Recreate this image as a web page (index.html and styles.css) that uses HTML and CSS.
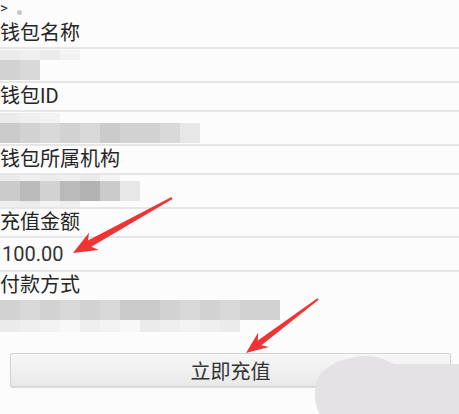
FILE: index.html
```html
<!DOCTYPE html>
<html lang="zh-CN">
<head>
    <meta charset="UTF-8">
    <meta name="viewport" content="width=device-width, initial-scale=1.0">
    <title>钱包充值</title>
    <link rel="stylesheet" href="styles.css">
</head>
<body>

<div class="page">
    <!-- top bar, mostly scrolled away -->
    <div class="topbar">
        <span class="back">&gt;</span>
        <span class="dot"></span>
    </div>

    <div class="label">钱包名称</div>
    <div class="value">
        <div class="strip s-top">
            <span class="c l1"></span><span class="c l2"></span><span class="c l1"></span><span class="c l3"></span>
        </div>
        <div class="strip s-main">
            <span class="c g3"></span><span class="c g4"></span>
        </div>
    </div>

    <div class="label">钱包ID</div>
    <div class="value">
        <div class="strip s-top">
            <span class="c l1"></span><span class="c l2"></span><span class="c l3"></span>
        </div>
        <div class="strip s-main">
            <span class="c g2"></span><span class="c g3"></span><span class="c g4"></span><span class="c g3"></span><span class="c g4"></span>
            <span class="c g2"></span><span class="c g3"></span><span class="c g3"></span><span class="c g4"></span><span class="c g5"></span>
        </div>
    </div>

    <div class="label">钱包所属机构</div>
    <div class="value">
        <div class="strip s-thin">
            <span class="c l1"></span><span class="c l2"></span><span class="c l1"></span><span class="c l2"></span><span class="c l1"></span><span class="c l3"></span>
        </div>
        <div class="strip s-main">
            <span class="c g2"></span><span class="c g1"></span><span class="c g3"></span><span class="c g1"></span>
            <span class="c g0"></span><span class="c g2"></span><span class="c g5"></span>
        </div>
        <div class="strip s-thin">
            <span class="c l2"></span><span class="c l1"></span><span class="c l3"></span><span class="c l2"></span>
        </div>
    </div>

    <div class="label">充值金额</div>
    <div class="value amount">100.00</div>

    <div class="label plain">付款方式</div>
    <div class="value plain">
        <div class="strip s-main">
            <span class="c g3"></span><span class="c g4"></span><span class="c g3"></span><span class="c g4"></span><span class="c g3"></span>
            <span class="c g4"></span><span class="c g2"></span><span class="c g2"></span><span class="c g3"></span><span class="c g4"></span>
            <span class="c g3"></span><span class="c g4"></span><span class="c g3"></span><span class="c g3"></span>
        </div>
        <div class="strip s-low">
            <span class="c l1"></span><span class="c l2"></span><span class="c l3"></span><span class="c l4"></span><span class="c l2"></span><span class="c l3"></span>
            <span class="c l4"></span><span class="c l1"></span><span class="c l2"></span><span class="c l3"></span><span class="c l2"></span><span class="c l1"></span>
        </div>
    </div>

    <button class="submit" type="button">立即充值</button>

    <!-- annotation marks drawn over the screenshot -->
    <svg class="marks" width="459" height="414" viewBox="0 0 459 414">
        <path class="smudge" d="M320 414 C313 404 313 381 322 372 C332 362 350 356 368 356 C380 356 388 362 395 364 L459 364 L459 414 Z"/>
        <polygon class="arrow" points="73,253 89.1,232.5 87.9,240.6 171.5,197.1 172.5,198.9 91.3,246.8 98.9,250.1"/>
        <polygon class="arrow" points="246,353 258.2,332.6 257.8,340.4 317.4,298.2 318.6,299.8 261.4,345.2 269,347"/>
    </svg>
</div>

</body>
</html>
```

FILE: styles.css
```css
body {
    margin: 0;
    background-color: #fcfcfc;
    color: #262626;
    font-family: "Roboto", "Noto Sans CJK SC", sans-serif;
    font-size: 20px;
}
.page {
    position: relative;
    width: 459px;
    height: 414px;
    overflow: hidden;
}
.topbar {
    height: 20px;
    display: flex;
    align-items: flex-start;
}
.back {
    font-size: 15px;
    line-height: 17px;
    color: #333;
}
.dot {
    width: 5px;
    height: 5px;
    margin: 10px 0 0 9px;
    border-radius: 50%;
    background-color: #c8c8c8;
}
.label {
    height: 27px;
    line-height: 27px;
    border-bottom: 2px solid #e6e6e6;
}
.value {
    height: 32px;
    line-height: 32px;
    border-bottom: 2px solid #e6e6e6;
    display: flex;
    flex-direction: column;
}
.label.plain,
.value.plain {
    border-bottom: none;
}
.value.plain {
    height: 36px;
    padding-top: 1px;
}
.amount {
    padding-left: 2px;
    color: #333;
}
.strip {
    display: flex;
}
.s-top {
    height: 10px;
    margin-top: 1px;
}
.s-main {
    height: 20px;
}
.s-thin {
    height: 6px;
}
.s-low {
    height: 12px;
}
.c {
    width: 20px;
    flex: none;
}
.g0 { background-color: #b3b3b3; }
.g1 { background-color: #bababa; }
.g2 { background-color: #cbcbcb; }
.g3 { background-color: #d2d2d2; }
.g4 { background-color: #d9d9d9; }
.g5 { background-color: #e7e7e7; }
.l1 { background-color: #ebebeb; }
.l2 { background-color: #efefef; }
.l3 { background-color: #f3f3f3; }
.l4 { background-color: #f8f8f8; }
.submit {
    display: block;
    width: 441px;
    height: 34px;
    margin: 17px 0 0 10px;
    padding: 0;
    background: linear-gradient(#f7f7f7, #e9e9e9);
    border: 1px solid #d3d3d3;
    border-radius: 2px;
    box-shadow: 0 1px 1px rgba(0, 0, 0, 0.12);
    color: #333;
    font-family: "Noto Sans CJK SC", sans-serif;
    font-size: 20px;
}
.marks {
    position: absolute;
    top: 0;
    left: 0;
    pointer-events: none;
}
.smudge {
    fill: #e4e2e4;
}
.arrow {
    fill: #f03434;
}
```
